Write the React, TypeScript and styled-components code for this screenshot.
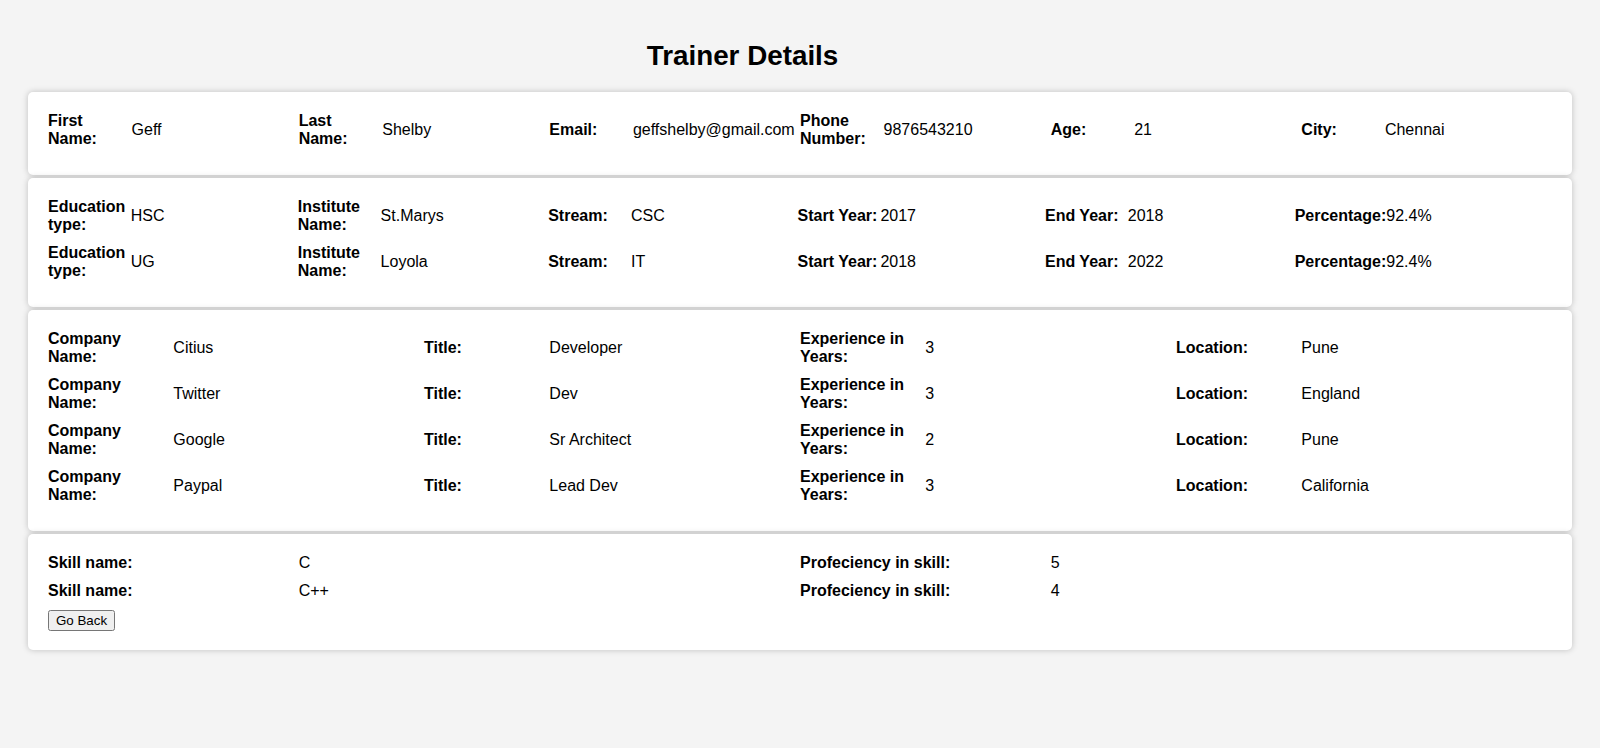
import React from "react";
import styled, { createGlobalStyle } from "styled-components";

const Global = createGlobalStyle`
  html, body {
    margin: 0;
    padding: 0;
    background: #f4f4f4;
  }
  body {
    font-family: "Liberation Sans", Arial, sans-serif;
    color: #000;
  }
`;

const Page = styled.div`
  min-height: 748px;
  box-sizing: border-box;
  background: #f4f4f4;
  padding: 40px 28px 40px;
  display: flex;
  flex-direction: column;
  gap: 3px;
`;

const Title = styled.h1`
  margin: 0 0 17px;
  padding-right: 115px;
  font-family: "Liberation Sans", Arial, sans-serif;
  font-size: 27.8px;
  line-height: 32px;
  font-weight: 700;
  text-align: center;
  color: #000;
`;

const Card = styled.section`
  background: #fff;
  border-radius: 5px;
  box-shadow: 0 0 6px rgba(0, 0, 0, 0.22);
  padding: 20px 20px 17px;
`;

const Row = styled.div<{ $cols: string }>`
  display: grid;
  grid-template-columns: ${(p) => p.$cols};
  align-items: center;
  margin-bottom: 10px;
`;

const Field = styled.div`
  display: flex;
  align-items: center;
  min-width: 0;
`;

const Label = styled.span<{ $w: string }>`
  flex: 0 0 auto;
  width: ${(p) => p.$w};
  min-width: min-content;
  font-size: 16px;
  line-height: 18px;
  font-weight: 700;
`;

const Value = styled.span`
  font-size: 16px;
  line-height: 18px;
  white-space: nowrap;
`;

const ButtonBar = styled.div`
  margin-bottom: 2px;
  line-height: 0;
`;

const BackButton = styled.button`
  font-family: "Liberation Sans", Arial, sans-serif;
  font-size: 13.3333px;
  line-height: normal;
  color: #000;
  padding: 1px 6px;
`;

type Pair = [string, string];

const FieldRow = ({ cols, labelW, items }: { cols: string; labelW: string; items: Pair[] }) => (
  <Row $cols={cols}>
    {items.map(([l, v], i) => (
      <Field key={i}>
        <Label $w={labelW}>{l}</Label>
        <Value>{v}</Value>
      </Field>
    ))}
  </Row>
);

const education: Pair[][] = [
  [
    ["Education type:", "HSC"],
    ["Institute Name:", "St.Marys"],
    ["Stream:", "CSC"],
    ["Start Year:", "2017"],
    ["End Year:", "2018"],
    ["Percentage:", "92.4%"],
  ],
  [
    ["Education type:", "UG"],
    ["Institute Name:", "Loyola"],
    ["Stream:", "IT"],
    ["Start Year:", "2018"],
    ["End Year:", "2022"],
    ["Percentage:", "92.4%"],
  ],
];

const jobs = [
  ["Citius", "Developer", "3", "Pune"],
  ["Twitter", "Dev", "3", "England"],
  ["Google", "Sr Architect", "2", "Pune"],
  ["Paypal", "Lead Dev", "3", "California"],
];

const skills = [
  ["C", "5"],
  ["C++", "4"],
];

export default function App() {
  return (
    <>
      <Global />
      <Page>
        <Title>Trainer Details</Title>
        <Card>
          <FieldRow
            cols="repeat(6, 1fr)"
            labelW="33.333%"
            items={[
              ["First Name:", "Geff"],
              ["Last Name:", "Shelby"],
              ["Email:", "geffshelby@gmail.com"],
              ["Phone Number:", "9876543210"],
              ["Age:", "21"],
              ["City:", "Chennai"],
            ]}
          />
        </Card>
        <Card>
          {education.map((items, i) => (
            <FieldRow
              key={i}
              cols="249.8px 250.4px 249.4px 247.4px 249.7px 1fr"
              labelW="82.8px"
              items={items}
            />
          ))}
        </Card>
        <Card>
          {jobs.map(([c, t, e, l], i) => (
            <FieldRow
              key={i}
              cols="repeat(4, 1fr)"
              labelW="33.333%"
              items={[
                ["Company Name:", c],
                ["Title:", t],
                ["Experience in Years:", e],
                ["Location:", l],
              ]}
            />
          ))}
        </Card>
        <Card>
          {skills.map(([s, p], i) => (
            <FieldRow
              key={i}
              cols="repeat(2, 1fr)"
              labelW="33.333%"
              items={[
                ["Skill name:", s],
                ["Profeciency in skill:", p],
              ]}
            />
          ))}
          <ButtonBar>
            <BackButton type="button">Go Back</BackButton>
          </ButtonBar>
        </Card>
      </Page>
    </>
  );
}
